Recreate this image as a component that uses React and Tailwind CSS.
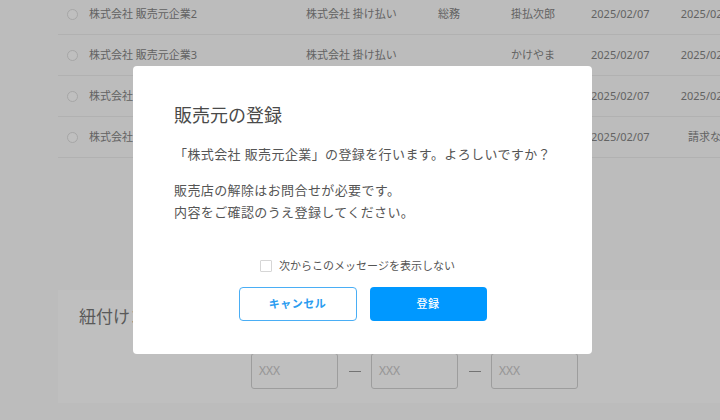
const rows = [
    { name: "株式会社 販売元企業2", payer: "株式会社 掛け払い", dept: "総務", person: "掛払次郎", date: "2025/02/07", last: "2025/02/07" },
    { name: "株式会社 販売元企業3", payer: "株式会社 掛け払い", dept: "", person: "かけやま", date: "2025/02/07", last: "2025/02/07" },
    { name: "株式会社 販売元企業4", payer: "株式会社 掛け払い", dept: "経理", person: "掛払花子", date: "2025/02/07", last: "2025/02/07" },
    { name: "株式会社 販売元企業5", payer: "株式会社 掛け払い", dept: "", person: "かけやま", date: "2025/02/07", last: "請求なし" },
];

const App = () => {
    return (
        <div className="relative w-full h-[420px] overflow-hidden bg-[#fbfbfb] font-['Noto_Sans','Noto_Sans_CJK_JP',sans-serif]">
            {/* list */}
            <div className="ml-[58px] -mt-[6px] w-[720px]">
                {rows.map((row) => (
                    <div
                        key={row.name}
                        className="flex items-center h-[41px] border-b border-[#ececec] pl-[9px] text-[11px] text-[#858585] whitespace-nowrap"
                    >
                        <span className="w-[11px] h-[11px] rounded-full border border-[#dedede] bg-white shrink-0"></span>
                        <span className="ml-[11px] w-[217px] shrink-0">{row.name}</span>
                        <span className="w-[132px] shrink-0">{row.payer}</span>
                        <span className="w-[73px] shrink-0">{row.dept}</span>
                        <span className="w-[80px] shrink-0">{row.person}</span>
                        <span className="w-[74px] shrink-0">{row.date}</span>
                        <span className="w-[90px] shrink-0 text-center">{row.last}</span>
                    </div>
                ))}
            </div>

            {/* link section */}
            <div className="ml-[58px] mt-[132px] w-[700px] h-[113px] bg-white pt-[14px] pl-[21px]">
                <h2 className="text-[17px] leading-[26px] text-[#777]">紐付けコード</h2>
                <div className="flex items-center ml-[172px] mt-[23px]">
                    <div className="w-[87px] h-[36px] border border-[#d2d2d2] rounded-[3px] flex items-center pl-[7px] text-[12px] text-[#c8c8c8]">XXX</div>
                    <span className="w-[33px] flex justify-center"><span className="w-[12px] h-px bg-[#9a9a9a]"></span></span>
                    <div className="w-[87px] h-[36px] border border-[#d2d2d2] rounded-[3px] flex items-center pl-[7px] text-[12px] text-[#c8c8c8]">XXX</div>
                    <span className="w-[33px] flex justify-center"><span className="w-[12px] h-px bg-[#9a9a9a]"></span></span>
                    <div className="w-[87px] h-[36px] border border-[#d2d2d2] rounded-[3px] flex items-center pl-[7px] text-[12px] text-[#c8c8c8]">XXX</div>
                </div>
            </div>

            {/* dialog */}
            <div className="absolute inset-0 bg-black/25 flex items-center justify-center pl-[5px]">
                <div className="w-[459px] bg-white rounded-[4px] pt-[36px] pb-[33px] px-[41px]">
                    <h1 className="text-[18px] leading-[26px] text-[#4a4a4a]">販売元の登録</h1>
                    <div className="mt-[15px] text-[13px] leading-[22px] tracking-[0.03em] text-[#555] whitespace-nowrap">
                        <p>「株式会社 販売元企業」の登録を行います。よろしいですか？</p>
                        <p className="mt-[14px]">
                            販売店の解除はお問合せが必要です。
                            <br />
                            内容をご確認のうえ登録してください。
                        </p>
                    </div>
                    <label className="mt-[35px] flex items-center justify-center gap-[7px] h-[16px] pr-[10px]">
                        <span className="w-[12px] h-[12px] border border-[#d6d6d6] rounded-[1px] bg-white"></span>
                        <span className="text-[11px] text-[#555]">次からこのメッセージを表示しない</span>
                    </label>
                    <div className="mt-[13px] flex justify-center gap-[13px]">
                        <button className="w-[118px] h-[34px] rounded-[4px] border border-[#4aaef5] bg-white text-[11px] font-semibold tracking-[0.05em] text-[#2a9cf0]">
                            キャンセル
                        </button>
                        <button className="w-[117px] h-[34px] rounded-[4px] bg-[#0098ff] text-[11px] font-medium tracking-[0.05em] text-white">
                            登録
                        </button>
                    </div>
                </div>
            </div>
        </div>
    );
};

export default App;
